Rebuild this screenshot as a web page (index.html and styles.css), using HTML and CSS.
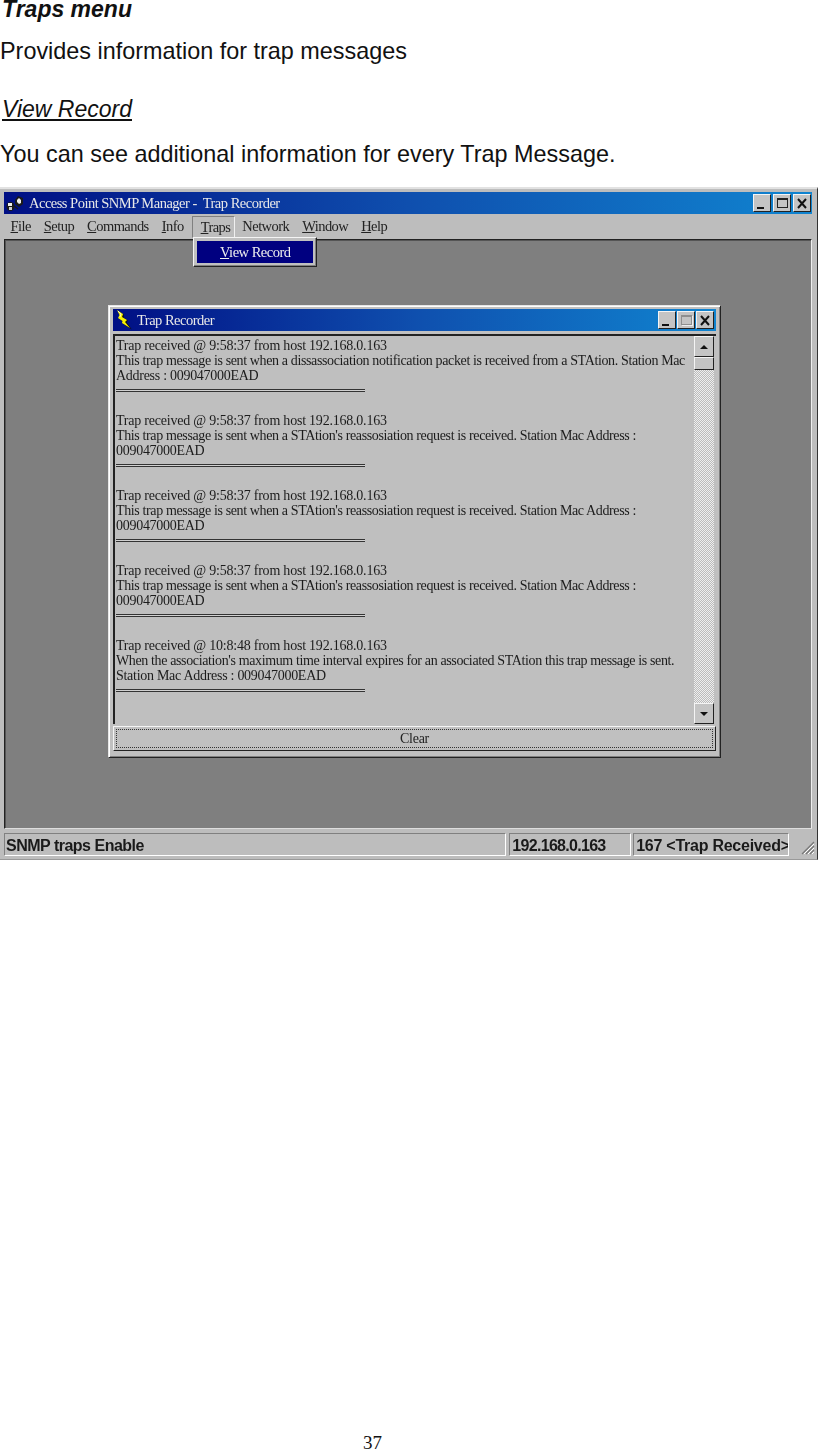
FILE: index.html
```html
<!DOCTYPE html>
<html lang="en">
<head>
    <meta charset="UTF-8">
    <title>Traps menu</title>
    <link rel="stylesheet" href="styles.css">
</head>
<body>
    <div class="page">
        <h2 class="menu-title">Traps menu</h2>
        <p class="intro">Provides information for trap messages</p>
        <h3 class="sub-title">View Record</h3>
        <p class="desc">You can see additional information for every Trap Message.</p>

        <div class="app">
            <div class="titlebar">
                <svg class="app-icon" width="18" height="17" viewBox="0 0 18 17">
                    <ellipse cx="4.5" cy="11.5" rx="4" ry="4.5" fill="#1a1a1a"/>
                    <rect x="2" y="8" width="4" height="3" fill="#eee"/>
                    <rect x="3" y="12" width="3" height="3" fill="#ccc"/>
                    <path d="M9 5 L12 1 L17 3 L17 9 L13 12 L9 9 Z" fill="#1a1a1a"/>
                    <path d="M11 5 L13 3 L15 5 L15 8 L13 9 L11 7 Z" fill="#eee"/>
                    <path d="M8 11 L12 14" stroke="#1a1a1a" stroke-width="1.2"/>
                </svg>
                <span class="title-text">Access Point SNMP Manager -&nbsp; Trap Recorder</span>
                <div class="win-buttons">
                    <div class="win-btn"><span class="glyph-min"></span></div>
                    <div class="win-btn"><span class="glyph-max"></span></div>
                    <div class="win-btn close-btn">
                        <svg width="12" height="11" viewBox="0 0 12 11"><path d="M2 1 L10 10 M10 1 L2 10" stroke="#111" stroke-width="2"/></svg>
                    </div>
                </div>
            </div>

            <div class="menubar">
                <span class="menu-item"><u>F</u>ile</span>
                <span class="menu-item"><u>S</u>etup</span>
                <span class="menu-item"><u>C</u>ommands</span>
                <span class="menu-item"><u>I</u>nfo</span>
                <span class="menu-item open"><u>T</u>raps</span>
                <span class="menu-item">Network</span>
                <span class="menu-item"><u>W</u>indow</span>
                <span class="menu-item"><u>H</u>elp</span>
            </div>

            <div class="client">
                <div class="dropdown">
                    <div class="dropdown-item"><u>V</u>iew Record</div>
                </div>

                <div class="child">
                    <div class="titlebar child-title">
                        <svg class="bolt" width="16" height="20" viewBox="0 0 16 20">
                            <path d="M2 1 L7 4 L7 7 L11 10 L10 12 L15 19 L7 14 L7 12 L3 9 L4 6 Z" fill="#111" transform="translate(0.8 0.6)"/>
                            <path d="M1 0 L7 4 L6 7 L11 10 L9 12 L14 18 L6 13 L6.5 11 L2 8 L3.5 5 Z" fill="#f6f000"/>
                            <path d="M2 1 L5 4 L4 7" stroke="#fbfbc0" stroke-width="1" fill="none"/>
                        </svg>
                        <span class="title-text">Trap Recorder</span>
                        <div class="win-buttons">
                            <div class="win-btn"><span class="glyph-min"></span></div>
                            <div class="win-btn"><span class="glyph-max disabled"></span></div>
                            <div class="win-btn close-btn">
                                <svg width="12" height="11" viewBox="0 0 12 11"><path d="M2 1 L10 10 M10 1 L2 10" stroke="#111" stroke-width="2"/></svg>
                            </div>
                        </div>
                    </div>

                    <div class="log-box">
                        <div class="log-text">
                            <div class="line head">Trap received @ 9:58:37 from host 192.168.0.163</div>
                            <div class="line prose">This trap message is sent when a dissassociation notification packet is received from a STAtion. Station Mac</div>
                            <div class="line">Address : 009047000EAD</div>
                            <div class="rule"></div>
                            <div class="gap"></div>
                            <div class="line head">Trap received @ 9:58:37 from host 192.168.0.163</div>
                            <div class="line prose">This trap message is sent when a STAtion's reassosiation request is received. Station Mac Address :</div>
                            <div class="line">009047000EAD</div>
                            <div class="rule"></div>
                            <div class="gap"></div>
                            <div class="line head">Trap received @ 9:58:37 from host 192.168.0.163</div>
                            <div class="line prose">This trap message is sent when a STAtion's reassosiation request is received. Station Mac Address :</div>
                            <div class="line">009047000EAD</div>
                            <div class="rule"></div>
                            <div class="gap"></div>
                            <div class="line head">Trap received @ 9:58:37 from host 192.168.0.163</div>
                            <div class="line prose">This trap message is sent when a STAtion's reassosiation request is received. Station Mac Address :</div>
                            <div class="line">009047000EAD</div>
                            <div class="rule"></div>
                            <div class="gap"></div>
                            <div class="line head">Trap received @ 10:8:48 from host 192.168.0.163</div>
                            <div class="line prose">When the association's maximum time interval expires for an associated STAtion this trap message is sent.</div>
                            <div class="line">Station Mac Address : 009047000EAD</div>
                            <div class="rule"></div>
                        </div>
                        <div class="scrollbar">
                            <div class="scroll-btn"><span class="arrow-up"></span></div>
                            <div class="scroll-thumb"></div>
                            <div class="scroll-track"></div>
                            <div class="scroll-btn"><span class="arrow-down"></span></div>
                        </div>
                    </div>

                    <div class="clear-btn"><div class="clear-focus">Clear</div></div>
                </div>
            </div>

            <div class="statusbar">
                <div class="panel panel-main">SNMP traps Enable</div>
                <div class="panel panel-host">192.168.0.163</div>
                <div class="panel panel-count">167 &lt;Trap Received&gt;</div>
                <svg class="grip" width="14" height="14" viewBox="0 0 14 14">
                    <path d="M13 1 L1 13 M13 5 L5 13 M13 9 L9 13" stroke="#777" stroke-width="1.2"/>
                    <path d="M13 3 L3 13 M13 7 L7 13 M13 11 L11 13" stroke="#fff" stroke-width="1"/>
                </svg>
            </div>
        </div>

        <div class="page-num">37</div>
    </div>
</body>
</html>
```
FILE: styles.css
```css
html, body {
    margin: 0;
    padding: 0;
    background-color: white;
}

.page {
    width: 818px;
    height: 1450px;
    overflow: hidden;
    display: flex;
    flex-direction: column;
    font-family: "Liberation Sans", Arial, sans-serif;
    color: #111;
}

.menu-title {
    margin: 0 0 0 2px;
    font-size: 23px;
    line-height: 19px;
    font-style: italic;
    font-weight: bold;
}

.intro {
    margin: 19px 0 0 0;
    font-size: 23.4px;
    line-height: 26px;
}

.sub-title {
    margin: 32px 0 0 2px;
    font-size: 23px;
    line-height: 26px;
    font-style: italic;
    font-weight: normal;
    text-decoration: underline;
}

.desc {
    margin: 19px 0 0 0;
    font-size: 23.4px;
    line-height: 26px;
}

/* main window */
.app {
    margin-top: 20px;
    height: 673px;
    flex: none;
    box-sizing: border-box;
    padding: 3px 5px 1px 4px;
    display: flex;
    flex-direction: column;
    background-color: #bdbdbd;
    border-top: 2px solid #e2e2e2;
    border-right: 1px solid #333;
    border-bottom: 1px solid #999;
    font-family: "Liberation Serif", "Times New Roman", serif;
    filter: blur(0.35px);
}

.titlebar {
    height: 22px;
    flex: none;
    display: flex;
    align-items: center;
    background: linear-gradient(90deg, #000f84 0%, #0f4fae 50%, #1084d0 100%);
    color: #e8e8e8;
}

.app-icon {
    margin-left: 2px;
    flex: none;
}

.title-text {
    margin-left: 5px;
    font-size: 14.5px;
    letter-spacing: -0.51px;
    white-space: nowrap;
}

.win-buttons {
    margin-left: auto;
    margin-right: 1px;
    display: flex;
    gap: 2px;
}

.win-btn {
    width: 18px;
    height: 18px;
    box-sizing: border-box;
    position: relative;
    display: flex;
    align-items: center;
    justify-content: center;
    background-color: #c4c4c4;
    border: 1px solid;
    border-color: #f4f4f4 #222 #222 #f4f4f4;
}

.glyph-min {
    position: absolute;
    left: 3px;
    bottom: 2px;
    width: 7px;
    height: 2px;
    background-color: #111;
}

.glyph-max {
    width: 11px;
    height: 10px;
    box-sizing: border-box;
    border: 1px solid #222;
    border-top-width: 2px;
}

.glyph-max.disabled {
    border-color: #8e8e8e;
    box-shadow: 1px 1px 0 #eee;
}

/* menu bar */
.menubar {
    height: 25px;
    flex: none;
    display: flex;
    align-items: center;
    font-size: 14.5px;
    letter-spacing: -0.56px;
    color: #222;
}

.menu-item {
    padding: 0 6.5px;
    height: 22px;
    line-height: 21px;
    white-space: nowrap;
    box-sizing: border-box;
}

.menu-item.open {
    margin-left: 1.5px;
    margin-right: 0.5px;
    margin-top: 1px;
    padding: 0 4px 0 8px;
    border: 1px solid;
    border-color: #808080 #f0f0f0 #bdbdbd #808080;
}

/* gray MDI area */
.client {
    flex: 1;
    position: relative;
    background-color: #7f7f7f;
    border: 1px solid;
    border-color: #222 #eee #ddd #222;
    box-shadow: inset 1px 1px 0 #555;
}

.dropdown {
    position: absolute;
    left: 188px;
    top: -3px;
    width: 124px;
    height: 30px;
    box-sizing: border-box;
    padding: 3px;
    background-color: #c0c0c0;
    border: 1px solid;
    border-color: #f4f4f4 #222 #222 #f4f4f4;
    box-shadow: inset -1px -1px 0 #808080;
}

.dropdown-item {
    height: 22px;
    line-height: 22px;
    padding-left: 23px;
    background-color: #000080;
    color: #eee;
    font-size: 14.5px;
    letter-spacing: -0.5px;
}

.child {
    position: absolute;
    left: 103px;
    top: 65px;
    width: 613px;
    height: 453px;
    box-sizing: border-box;
    padding: 3px 4px 3px 4px;
    display: flex;
    flex-direction: column;
    background-color: #c0c0c0;
    border: 1px solid;
    border-color: #e6e6e6 #222 #222 #e6e6e6;
    box-shadow: inset 1px 1px 0 #fff, inset -1px -1px 0 #808080;
}

.child-title {
    height: 22px;
}

.bolt {
    margin-left: 3px;
    flex: none;
}

.child-title .title-text {
    margin-left: 5px;
}

.child-title .win-buttons {
    margin-right: 2px;
    gap: 1px;
}

.log-box {
    margin-top: 3px;
    height: 390px;
    box-sizing: border-box;
    flex: none;
    display: flex;
    background-color: #bfbfbf;
    border-top: 2px solid #222;
    border-left: 2px solid #222;
}

.log-text {
    flex: 1;
    min-width: 0;
    padding: 2px 0 0 1px;
    font-size: 14px;
    letter-spacing: -0.28px;
    line-height: 15px;
    color: #1c1c1c;
    white-space: nowrap;
}

.line {
    height: 15px;
}

.line.head {
    letter-spacing: -0.22px;
}

.line.prose {
    letter-spacing: -0.37px;
}

.gap {
    height: 15px;
}

.rule {
    height: 15px;
    width: 249px;
    box-sizing: border-box;
    position: relative;
}

.rule::after {
    content: "";
    position: absolute;
    left: 0;
    right: 0;
    top: 6px;
    height: 3px;
    background-color: #d0d0d0;
    border-top: 1px solid #333;
    border-bottom: 1px solid #333;
    box-sizing: border-box;
}

.scrollbar {
    width: 20px;
    flex: none;
    display: flex;
    flex-direction: column;
    margin-right: 2px;
}

.scroll-btn {
    height: 21px;
    flex: none;
    box-sizing: border-box;
    display: flex;
    align-items: center;
    justify-content: center;
    background-color: #c4c4c4;
    border: 1px solid;
    border-color: #f4f4f4 #222 #222 #f4f4f4;
}

.arrow-up {
    border-left: 4px solid transparent;
    border-right: 4px solid transparent;
    border-bottom: 4px solid #111;
}

.arrow-down {
    border-left: 4px solid transparent;
    border-right: 4px solid transparent;
    border-top: 4px solid #111;
}

.scroll-thumb {
    height: 13px;
    flex: none;
    box-sizing: border-box;
    background-color: #c4c4c4;
    border: 1px solid;
    border-color: #f4f4f4 #222 #222 #f4f4f4;
}

.scroll-track {
    flex: 1;
    background-color: #d8d8d8;
    background-image: repeating-conic-gradient(#bbb 0 25%, #eee 0 50%);
    background-size: 2px 2px;
}

.clear-btn {
    margin-top: 2px;
    height: 25px;
    flex: none;
    box-sizing: border-box;
    padding: 2px;
    background-color: #c0c0c0;
    border: 1px solid;
    border-color: #f4f4f4 #222 #222 #f4f4f4;
}

.clear-focus {
    height: 100%;
    box-sizing: border-box;
    border: 1px dotted #333;
    font-size: 14px;
    letter-spacing: -0.28px;
    line-height: 17px;
    text-align: center;
    color: #222;
}

/* status bar */
.statusbar {
    height: 28px;
    flex: none;
    display: flex;
    align-items: center;
    gap: 3px;
    padding-top: 1px;
    margin-right: -3px;
    font-family: "Liberation Sans", Arial, sans-serif;
    font-weight: bold;
    font-size: 16px;
    letter-spacing: -0.25px;
    color: #1a1a1a;
}

.panel {
    height: 23px;
    line-height: 23px;
    box-sizing: border-box;
    padding-left: 2px;
    white-space: nowrap;
    overflow: hidden;
    border: 1px solid;
    border-color: #808080 #fff #fff #808080;
}

.panel-main {
    width: 503px;
    padding-left: 1px;
    letter-spacing: -0.5px;
}

.panel-host {
    width: 122px;
    letter-spacing: -0.7px;
}

.panel-count {
    width: 156px;
    margin-left: -1px;
}

.grip {
    margin-left: 9px;
    margin-top: 8px;
    flex: none;
}

.page-num {
    margin: auto 0 0 363px;
    font-family: "Liberation Serif", "Times New Roman", serif;
    font-size: 19px;
    line-height: 14px;
}
```
